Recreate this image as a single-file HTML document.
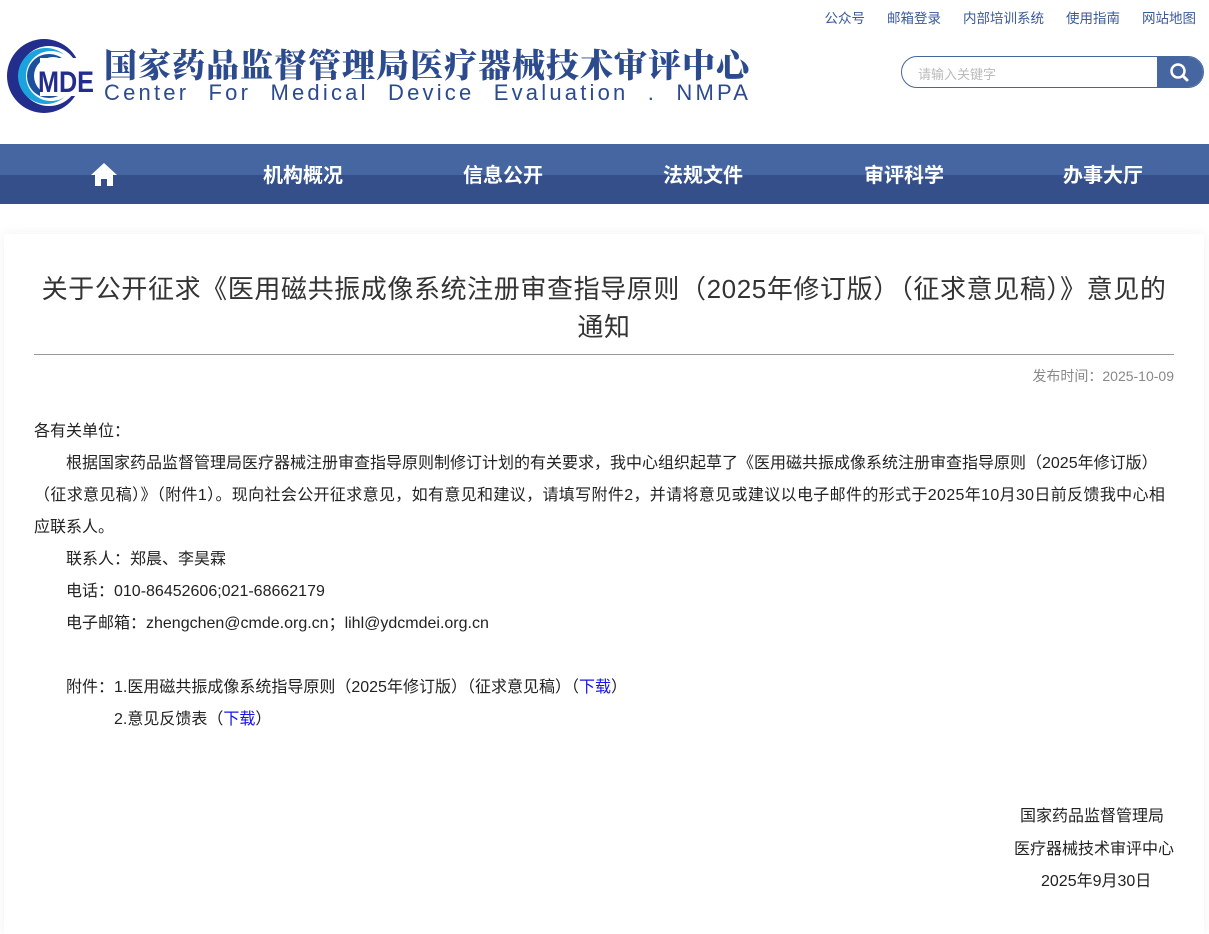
<!DOCTYPE html>
<html><head><meta charset="utf-8"><style>
*{margin:0;padding:0;box-sizing:border-box}
body{width:1209px;height:907px;overflow:hidden;background:#fff;font-family:"Liberation Sans","Noto Sans CJK SC",sans-serif;color:#222}
.header{background:#fff;height:144px;position:relative}
.toplinks{position:absolute;right:13px;top:7px;font-size:13.5px;color:#3a5a99}
.toplinks span{margin-left:22px}
.logo{position:absolute;left:6px;top:38px}
.cn{position:absolute;left:104px;top:40px;font-family:"Noto Serif CJK SC",serif;font-weight:900;font-size:33px;color:#2c4a8e;letter-spacing:1px;white-space:nowrap}
.en{position:absolute;left:104px;top:80px;font-size:22px;color:#2c4a8e;letter-spacing:3.2px;word-spacing:10px;white-space:nowrap}
.search{position:absolute;left:901px;top:56px;width:303px;height:32px;border:1px solid #4566a0;border-radius:16px;overflow:hidden;background:#fff}
.search .ph{position:absolute;left:16px;top:7px;font-size:13px;color:#bbb}
.search .btn{position:absolute;right:0;top:0;width:46px;height:32px;background:#4566a0}
.nav{height:60px;background:linear-gradient(#4566a0 0,#4566a0 31px,#354f8a 31px)}
.nav div{position:absolute;top:159px;font-size:20px;font-weight:bold;color:#fff}
.card{position:absolute;left:4px;top:234px;width:1200px;height:700px;background:#fff;box-shadow:0 0 12px rgba(0,0,0,0.06)}
h1{position:absolute;left:20px;width:1160px;top:36px;text-align:center;font-size:26px;font-weight:normal;line-height:38px;color:#333;letter-spacing:0.6px}
.hr{position:absolute;left:30px;width:1140px;top:120px;border-top:1px solid #999}
.date{position:absolute;right:30px;top:132px;font-size:14px;color:#888}
.body{position:absolute;left:30px;width:1150px;top:182px;font-size:16px;line-height:32px;color:#222;white-space:nowrap}
.ind{text-indent:32px}
a{color:#1515e6;text-decoration:none}
.r{position:absolute;font-size:16px}
</style></head><body>
<div class="header">
<div class="toplinks"><span>公众号</span><span>邮箱登录</span><span>内部培训系统</span><span>使用指南</span><span>网站地图</span></div>
<svg class="logo" width="92" height="76" viewBox="0 0 92 76">
<circle cx="38" cy="38" r="37" fill="#232d8c"/>
<circle cx="43" cy="38" r="30" fill="#fff"/>
<circle cx="40" cy="38" r="28" fill="#1aa3dc"/>
<circle cx="45" cy="38" r="25" fill="#fff"/>
<circle cx="43" cy="38" r="22" fill="#1c4f9c"/>
<circle cx="47" cy="38" r="19" fill="#fff"/>
<rect x="34" y="20" width="58" height="38" fill="#fff"/>
<text x="32" y="54" font-family="Liberation Sans" font-weight="bold" font-size="30" fill="#232d8c" textLength="56" lengthAdjust="spacingAndGlyphs">MDE</text>
</svg>
<div class="cn">国家药品监督管理局医疗器械技术审评中心</div>
<div class="en">Center For Medical Device Evaluation . NMPA</div>
<div class="search"><div class="ph">请输入关键字</div><div class="btn"><svg width="46" height="32"><circle cx="21" cy="14" r="6.5" stroke="#fff" stroke-width="2.5" fill="none"/><line x1="26" y1="19" x2="30" y2="23" stroke="#fff" stroke-width="3" stroke-linecap="round"/></svg></div></div>
</div>
<div class="nav">
<svg style="position:absolute;left:90px;top:162px" width="28" height="24" viewBox="0 0 28 24"><path d="M14 1 L1 13 H5 V24 H11 V17 H17 V24 H23 V13 H27 Z" fill="#fff"/></svg>
<div style="left:263px">机构概况</div><div style="left:463px">信息公开</div><div style="left:663px">法规文件</div><div style="left:864px">审评科学</div><div style="left:1063px">办事大厅</div>
</div>
<div class="card">
<h1>关于公开征求《医用磁共振成像系统注册审查指导原则（2025年修订版）（征求意见稿）》意见的<br>通知</h1>
<div class="hr"></div>
<div class="date">发布时间：2025-10-09</div>
<div class="body">
<p>各有关单位：</p>
<p class="ind">根据国家药品监督管理局医疗器械注册审查指导原则制修订计划的有关要求，我中心组织起草了《医用磁共振成像系统注册审查指导原则（2025年修订版）</p>
<p style="letter-spacing:0.35px">（征求意见稿）》（附件1）。现向社会公开征求意见，如有意见和建议，请填写附件2，并请将意见或建议以电子邮件的形式于2025年10月30日前反馈我中心相</p>
<p>应联系人。</p>
<p class="ind">联系人：郑晨、李昊霖</p>
<p class="ind">电话：010-86452606;021-68662179</p>
<p class="ind">电子邮箱：zhengchen@cmde.org.cn；lihl@ydcmdei.org.cn</p>
<p>&nbsp;</p>
<p class="ind">附件：1.医用磁共振成像系统指导原则（2025年修订版）（征求意见稿）（<a>下载</a>）</p>
<p style="padding-left:80px">2.意见反馈表（<a>下载</a>）</p>
</div>
<div class="r" style="left:1016px;top:568px">国家药品监督管理局</div>
<div class="r" style="left:1010px;top:601px">医疗器械技术审评中心</div>
<div class="r" style="left:1037px;top:633px">2025年9月30日</div>
</div>
</body></html>
